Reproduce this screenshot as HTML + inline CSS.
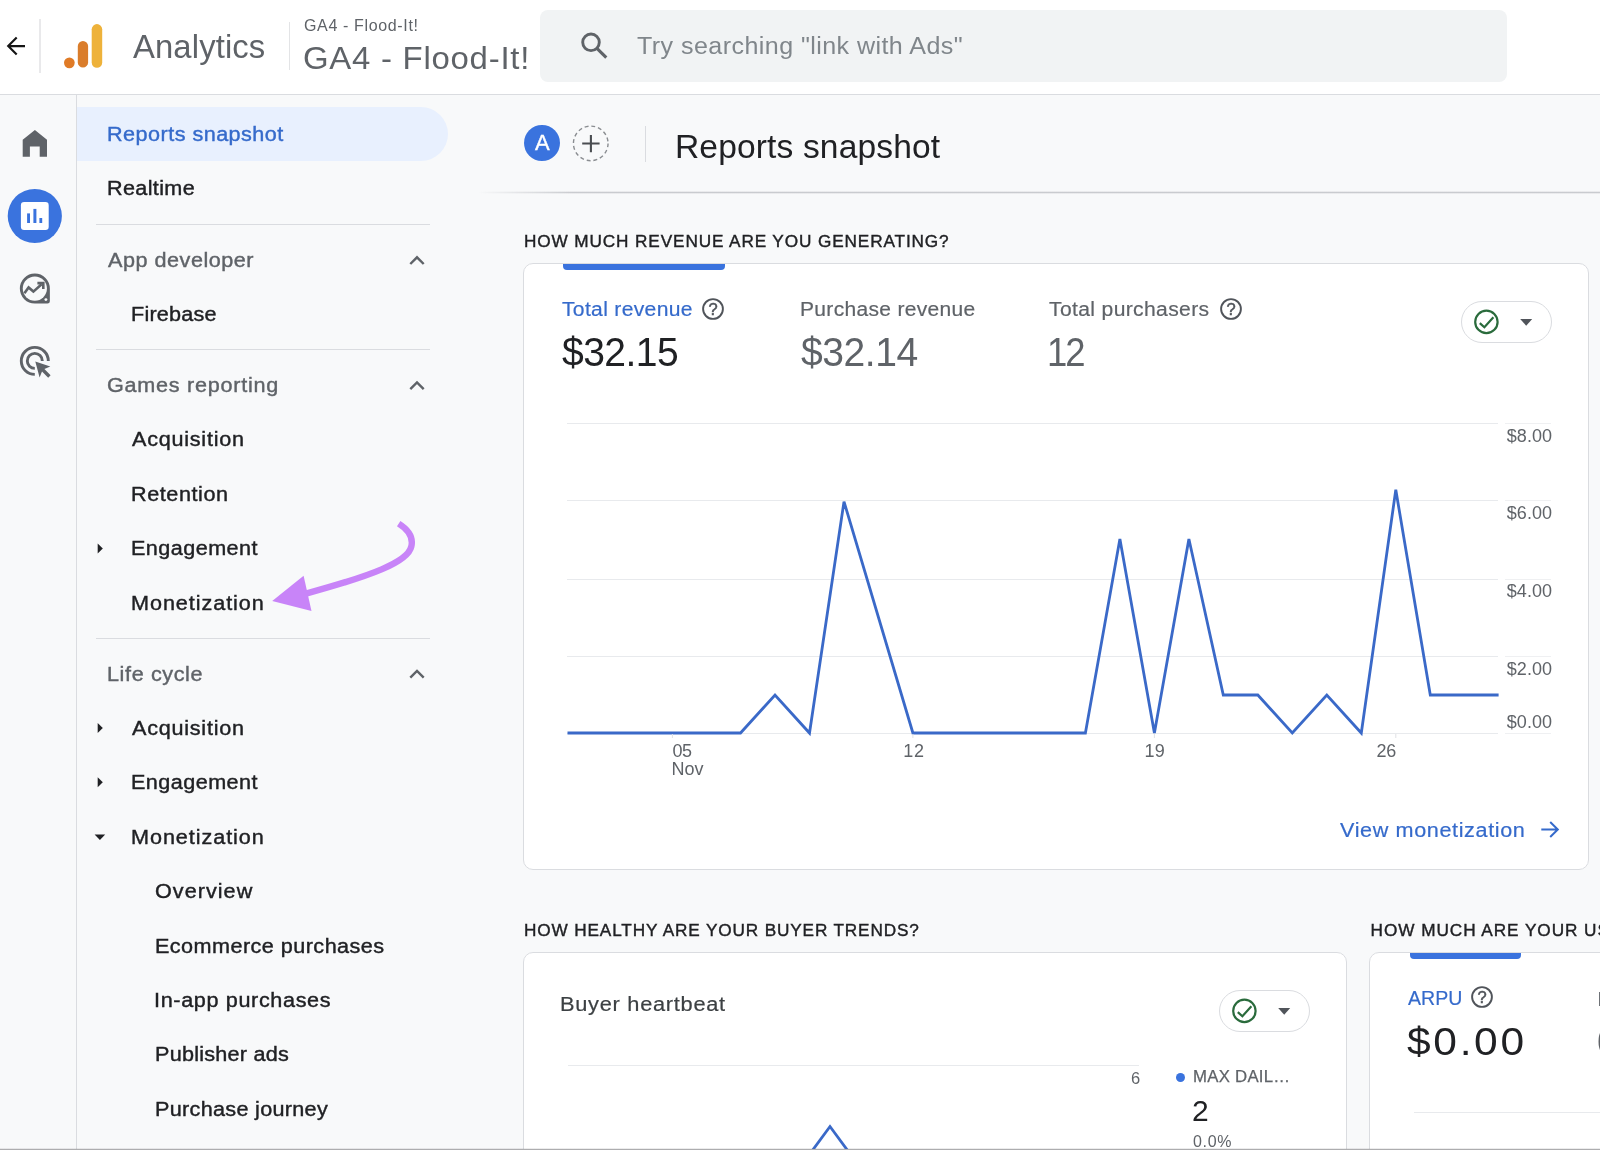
<!DOCTYPE html>
<html lang="en">
<head>
<meta charset="utf-8">
<title>Analytics - Reports snapshot</title>
<style>
*{box-sizing:border-box;margin:0;padding:0}
html,body{width:1600px;height:1150px;overflow:hidden;background:#f8f9fa}
body{position:relative;font-family:"Liberation Sans",Arial,sans-serif;color:#202124;-webkit-font-smoothing:antialiased}
#root{position:absolute;left:0;top:0;width:1600px;height:1150px;overflow:hidden;will-change:transform}
.abs{position:absolute}
.t{position:absolute;white-space:nowrap;line-height:1;transform-origin:0 50%}
/* header */
#hdr{position:absolute;left:0;top:0;width:1600px;height:95px;background:#fff;border-bottom:1px solid #dadce0}
#search{position:absolute;left:540px;top:10px;width:967px;height:72px;background:#f1f3f4;border-radius:8px}
.vsep{position:absolute;width:1px;background:#dadce0}
/* rail + nav */
#rail{position:absolute;left:0;top:95px;width:77px;height:1055px;background:#f8f9fa;border-right:1px solid #dadce0}
#nav{position:absolute;left:77px;top:95px;width:400px;height:1055px;background:#f8f9fa}
.nv{position:absolute;white-space:nowrap;line-height:1;font-size:20px;color:#202124;letter-spacing:.35px;transform-origin:0 50%;-webkit-text-stroke:.4px currentColor}
.nv.g{color:#5f6368}
.hr{position:absolute;left:96px;width:334px;height:1px;background:#dadce0}
.sec{position:absolute;white-space:nowrap;line-height:1;font-size:17.2px;letter-spacing:1.2px;color:#202124;transform-origin:0 50%;-webkit-text-stroke:.4px currentColor}
.card{position:absolute;background:#fff;border:1px solid #dadce0;border-radius:10px}
.grid{position:absolute;height:1px;background:#e8eaed}
.ax{position:absolute;white-space:nowrap;line-height:1;font-size:18px;color:#5f6368}
.m{font-size:20px;letter-spacing:.8px;-webkit-text-stroke:.2px currentColor}
.v{font-size:40.5px}
.grid.f{background:#eff0f2}
.pill{position:absolute;width:91px;height:42px;border:1px solid #dadce0;border-radius:21px;background:#fff}
</style>
</head>
<body>
<div id="root">
<!-- HEADER -->
<div id="hdr"></div>
<div id="search"></div>
<div class="vsep" style="left:39px;top:19px;width:2px;height:54px;background:#e9e9eb"></div>
<div class="vsep" style="left:289px;top:22px;height:48px;background:#e3e4e6"></div>
<svg class="abs" id="ic-back" style="left:4px;top:34px" width="24" height="24" viewBox="0 0 24 24"><path d="M12.7 3.6 4.2 12.1 12.7 20.6M4.6 12.1H21" fill="none" stroke="#151515" stroke-width="2.15"/></svg>
<svg class="abs" id="ic-logo" style="left:60px;top:20px" width="48" height="52" viewBox="60 20 48 52">
<rect x="91.7" y="24.1" width="10.5" height="43.7" rx="5.25" fill="#eeb23a"/>
<rect x="77.8" y="40.9" width="10.3" height="26.7" rx="5.15" fill="#da7d2b"/>
<circle cx="69.35" cy="62.85" r="5.35" fill="#e07b26"/>
</svg>
<span class="t fit" id="t-analytics" style="left:133px;top:31px;font-size:32.8px;letter-spacing:0.125px;color:#5f6368">Analytics</span>
<span class="t fit" id="t-prop-s" style="left:304px;top:17.5px;font-size:16px;letter-spacing:0.643px;color:#5f6368">GA4 - Flood-It!</span>
<span class="t fit" id="t-prop-l" style="left:303px;top:42.75px;font-size:31.5px;letter-spacing:0.714px;color:#5f6368;transform:scaleX(1.045)">GA4 - Flood-It!</span>
<svg class="abs" id="ic-search" style="left:578px;top:29px" width="32" height="32" viewBox="578 29 32 32"><circle cx="591" cy="42.3" r="8.3" fill="none" stroke="#5f6368" stroke-width="2.9"/><path d="M597.2 48.6 606.3 57.7" stroke="#5f6368" stroke-width="3.1" fill="none"/></svg>
<span class="t fit" id="t-search" style="left:637px;top:34.75px;font-size:23px;letter-spacing:0.393px;color:#80868b;transform:scaleX(1.09)">Try searching "link with Ads"</span>

<!-- RAIL -->
<div id="rail"></div>
<svg class="abs" id="ic-rail" style="left:0;top:120px" width="76" height="270" viewBox="0 120 76 270">
<path d="M22.7 139.7 34.9 129.9 47 139.7V156.8H39.7V146.6H29.9V156.8H22.7Z" fill="#5f6368"/>
<circle cx="34.8" cy="216" r="27.1" fill="#3a73de"/>
<rect x="20.9" y="202" width="27.8" height="28" rx="3.2" fill="#fff"/>
<rect x="27.1" y="213.4" width="2.9" height="9.6" fill="#3a73de"/>
<rect x="33.4" y="208.9" width="3" height="14.1" fill="#3a73de"/>
<rect x="39.4" y="218" width="2.8" height="5" fill="#3a73de"/>
<path d="M34.85 273.6a15 15 0 1 0 0 30h12.6a2.4 2.4 0 0 0 2.4-2.4V288.6a15 15 0 0 0-15-15Z" fill="#5f6368"/><circle cx="34.85" cy="288.6" r="12.1" fill="#f8f9fa"/><circle cx="45.9" cy="299.6" r="1.45" fill="#f8f9fa"/>
<g fill="none" stroke="#5f6368" stroke-width="2.9">
<path d="M24.4 293.2 28.6 287.4 33.4 291.6 41.6 284.2" stroke-width="2.6"/>
<path d="M37.4 283.1H43.3V289" stroke-width="2.6"/>
<path d="M48.3 360.9A13.5 13.5 0 1 0 34.8 374.4"/>
<path d="M42.3 360.9A7.5 7.5 0 1 0 34.8 368.4"/>
</g>
<path d="M35.3 361.6 50.3 366.6 44.4 369.1 50.6 375.3 48.2 377.7 42 371.5 39.6 377.4Z" fill="#5f6368"/>
</svg>

<!-- NAV -->
<div class="abs" id="sel" style="left:77px;top:107px;width:371px;height:54px;background:#e8f0fe;border-radius:0 27px 27px 0"></div>
<span class="nv fit" id="n0" style="left:107px;top:123.75px;letter-spacing:0.434px;color:#356acb;transform:scaleX(1.08)">Reports snapshot</span>
<span class="nv fit" id="n1" style="left:107px;top:178.4px;letter-spacing:0.328px;transform:scaleX(1.08)">Realtime</span>
<div class="hr" style="top:224px"></div>
<span class="nv g fit" id="n2" style="left:108px;top:249.5px;letter-spacing:0.483px;transform:scaleX(1.08)">App developer</span>
<span class="nv fit" id="n3" style="left:131px;top:303.75px;letter-spacing:0.186px;transform:scaleX(1.08)">Firebase</span>
<div class="hr" style="top:349px"></div>
<span class="nv g fit" id="n4" style="left:107px;top:374.5px;letter-spacing:0.686px;transform:scaleX(1.08)">Games reporting</span>
<span class="nv fit" id="n5" style="left:132px;top:429px;letter-spacing:0.7px;transform:scaleX(1.08)">Acquisition</span>
<span class="nv fit" id="n6" style="left:131px;top:483.61px;letter-spacing:0.525px;transform:scaleX(1.08)">Retention</span>
<span class="nv fit" id="n7" style="left:131px;top:538.21px;letter-spacing:0.412px;transform:scaleX(1.08)">Engagement</span>
<span class="nv fit" id="n8" style="left:131px;top:592.71px;letter-spacing:0.866px;transform:scaleX(1.08)">Monetization</span>
<div class="hr" style="top:638px"></div>
<span class="nv g fit" id="n9" style="left:107px;top:663.81px;letter-spacing:0.566px;transform:scaleX(1.08)">Life cycle</span>
<span class="nv fit" id="n10" style="left:132px;top:718px;letter-spacing:0.7px;transform:scaleX(1.08)">Acquisition</span>
<span class="nv fit" id="n11" style="left:131px;top:772.4px;letter-spacing:0.412px;transform:scaleX(1.08)">Engagement</span>
<span class="nv fit" id="n12" style="left:131px;top:826.9px;letter-spacing:0.866px;transform:scaleX(1.08)">Monetization</span>
<span class="nv fit" id="n13" style="left:154.6px;top:881.21px;letter-spacing:0.956px;transform:scaleX(1.08)">Overview</span>
<span class="nv fit" id="n14" style="left:155.2px;top:935.6px;letter-spacing:0.422px;transform:scaleX(1.08)">Ecommerce purchases</span>
<span class="nv fit" id="n15" style="left:153.6px;top:990px;letter-spacing:0.594px;transform:scaleX(1.08)">In-app purchases</span>
<span class="nv fit" id="n16" style="left:154.6px;top:1044.21px;letter-spacing:0.233px;transform:scaleX(1.08)">Publisher ads</span>
<span class="nv fit" id="n17" style="left:154.6px;top:1098.61px;letter-spacing:0.287px;transform:scaleX(1.08)">Purchase journey</span>
<svg class="abs" id="ic-nav" style="left:90px;top:250px" width="345" height="600" viewBox="90 250 345 600">
<g fill="none" stroke="#5f6368" stroke-width="2.4">
<path d="M410.3 264 417 257.3 423.7 264"/>
<path d="M410.3 389.2 417 382.5 423.7 389.2"/>
<path d="M410.3 677.6 417 670.9 423.7 677.6"/>
</g>
<g fill="#202124">
<path d="M97.7 543.4 102.8 548.4 97.7 553.4Z"/>
<path d="M97.7 723 102.8 728 97.7 733Z"/>
<path d="M97.7 777.3 102.8 782.3 97.7 787.3Z"/>
<path d="M94.6 834.5H105.2L99.9 840Z"/>
</g>
</svg>
<svg class="abs" id="ic-purple" style="left:265px;top:515px" width="160" height="105" viewBox="265 515 160 105">
<path d="M398.7 523.6C408 529.5 413.5 537.5 411.3 546.5C408 562 372 575.5 306 593.6" fill="none" stroke="#c884f8" stroke-width="6.4"/>
<path d="M272.2 600.9 303.6 575.7 311.5 611Z" fill="#c884f8"/>
</svg>

<!-- MAIN -->
<div class="abs" id="av" style="left:524.4px;top:125.4px;width:35.8px;height:35.8px;border-radius:50%;background:#3a73de"></div>
<span class="t fit" id="t-av" style="left:534.9px;top:132.41px;font-size:22px;color:#fff;-webkit-text-stroke:.35px #fff;letter-spacing:0px">A</span>
<svg class="abs" id="ic-plus" style="left:570px;top:123px" width="42" height="42" viewBox="570 123 42 42"><circle cx="590.75" cy="143.4" r="17.3" fill="none" stroke="#8a8d91" stroke-width="1.4" stroke-dasharray="3.9 2.9"/><path d="M582.2 143.5H599.6M590.9 134.9V152.2" stroke="#4a4d51" stroke-width="2.1" fill="none"/></svg>
<div class="vsep" style="left:645px;top:126px;height:36px;background:#dadce0"></div>
<span class="t fit" id="t-title" style="left:675px;top:130.81px;font-size:32.6px;letter-spacing:0.134px;color:#202124;transform:scaleX(1.03)">Reports snapshot</span>
<div class="abs" id="shadow" style="left:478px;top:191px;width:1122px;height:3px;background:linear-gradient(rgba(198,200,204,.28) 0 33.3%,#c9cbcf 33.3% 66.6%,rgba(198,200,204,.28) 66.6%);-webkit-mask-image:linear-gradient(90deg,transparent,#000 95px);mask-image:linear-gradient(90deg,transparent,#000 95px)"></div>

<span class="sec fit" id="s1" style="left:524px;top:233px;letter-spacing:0.883px">HOW MUCH REVENUE ARE YOU GENERATING?</span>
<div class="card" id="c1" style="left:523px;top:263px;width:1066px;height:607px"></div>
<div class="abs" style="left:563px;top:264px;width:161.5px;height:6px;background:#3a73de;border-radius:0 0 4px 4px"></div>
<span class="t m fit" id="m1" style="left:562px;top:299.25px;color:#356acb;letter-spacing:0.3px;transform:scaleX(1.055)">Total revenue</span>
<span class="t v fit" id="v1" style="left:562px;top:331.75px;color:#202124;letter-spacing:-0.6px;transform:scaleX(0.965)">$32.15</span>
<span class="t m fit" id="m2" style="left:800px;top:299.25px;color:#5f6368;letter-spacing:0.306px;transform:scaleX(1.05)">Purchase revenue</span>
<span class="t v fit" id="v2" style="left:801px;top:332px;color:#5f6368;letter-spacing:-0.48px;transform:scaleX(0.965)">$32.14</span>
<span class="t m fit" id="m3" style="left:1049px;top:299.25px;color:#5f6368;letter-spacing:0.333px;transform:scaleX(1.055)">Total purchasers</span>
<span class="t v fit" id="v3" style="left:1047.4px;top:332px;color:#5f6368;letter-spacing:-2.2px;transform:scaleX(.9)">12</span>
<svg class="abs" id="ic-q1" style="left:700px;top:296px" width="26" height="26" viewBox="-13 -13 26 26"><use href="#qm"/></svg>
<svg class="abs" id="ic-q2" style="left:1217.5px;top:295.5px" width="26" height="26" viewBox="-13 -13 26 26"><use href="#qm"/></svg>
<div class="pill" style="left:1461px;top:301px"></div>
<svg class="abs" id="ic-p1" style="left:1470px;top:306px" width="70" height="32" viewBox="-16.4 -15.9 70 32"><use href="#chk"/></svg>

<!-- chart 1 -->
<div class="grid" style="left:567px;top:423px;width:931px"></div>
<div class="grid" style="left:567px;top:500px;width:931px"></div>
<div class="grid" style="left:567px;top:579px;width:931px"></div>
<div class="grid" style="left:567px;top:656px;width:931px"></div>
<div class="grid" style="left:567px;top:733px;width:931px"></div>
<div class="grid f" style="left:1505px;top:423px;width:46px"></div>
<div class="grid f" style="left:1505px;top:500px;width:46px"></div>
<div class="grid f" style="left:1505px;top:579px;width:46px"></div>
<div class="grid f" style="left:1505px;top:656px;width:46px"></div>
<div class="grid f" style="left:1505px;top:733px;width:46px"></div>
<span class="ax fit" id="y8" style="left:1506.8px;top:426.75px;letter-spacing:0.05px">$8.00</span>
<span class="ax fit" id="y6" style="left:1506.8px;top:504px;letter-spacing:0.05px">$6.00</span>
<span class="ax fit" id="y4" style="left:1506.8px;top:582.31px;letter-spacing:0.05px">$4.00</span>
<span class="ax fit" id="y2" style="left:1506.8px;top:659.5px;letter-spacing:0.05px">$2.00</span>
<span class="ax fit" id="y0" style="left:1506.8px;top:712.81px;letter-spacing:0.05px">$0.00</span>
<span class="ax fit" id="x05" style="left:672.4px;top:742.31px;letter-spacing:-0.4px">05</span>
<span class="ax fit" id="xnov" style="left:671.4px;top:760px;letter-spacing:0.1px">Nov</span>
<span class="ax fit" id="x12" style="left:903.2px;top:742.31px;letter-spacing:0.8px">12</span>
<span class="ax fit" id="x19" style="left:1144.4px;top:742.31px;letter-spacing:0.4px">19</span>
<span class="ax fit" id="x26" style="left:1376.4px;top:742.31px;letter-spacing:-0.2px">26</span>
<svg class="abs" id="ch1" style="left:560px;top:480px" width="945" height="262" viewBox="560 480 945 262">
<path d="M567.5 733H740.5L775 695 809.5 733 844 501.6 912.9 733H1085.4L1119.9 539 1154.4 733 1188.9 539 1223.3 695H1257.8L1292.3 733 1326.8 695 1361.3 733 1395.8 489.8 1430.3 695H1498.6" fill="none" stroke="#3a69c8" stroke-width="2.8" stroke-linejoin="miter"/>
<path d="M672.4 734v4M912.9 734v4M1154.4 734v4M1395.8 734v4" stroke="#e0e2e5" stroke-width="1"/>
</svg>
<span class="t m fit" id="lnk" style="left:1339.6px;top:819.5px;color:#356acb;letter-spacing:0.574px;transform:scaleX(1.08)">View monetization</span>
<svg class="abs" id="ic-arr" style="left:1538px;top:818px" width="24" height="24" viewBox="1538 818 24 24"><path d="M1541.3 829.5H1557.5M1550.2 822 1557.8 829.5 1550.2 837" fill="none" stroke="#356acb" stroke-width="2"/></svg>

<span class="sec fit" id="s2" style="left:524px;top:922px;letter-spacing:0.862px">HOW HEALTHY ARE YOUR BUYER TRENDS?</span>
<div class="card" id="c2" style="left:523px;top:952px;width:824px;height:260px"></div>
<span class="t m fit" id="bh" style="left:560px;top:994.25px;color:#3c4043;letter-spacing:0.657px;transform:scaleX(1.09)">Buyer heartbeat</span>
<div class="pill" style="left:1219px;top:990px"></div>
<svg class="abs" id="ic-p2" style="left:1228.4px;top:994.5px" width="70" height="32" viewBox="-16.4 -15.9 70 32"><use href="#chk"/></svg>
<div class="grid" style="left:568px;top:1065px;width:571px"></div>
<span class="ax fit" id="b6" style="left:1131px;top:1069.75px;font-size:16.5px;letter-spacing:0px">6</span>
<div class="abs" style="left:1176px;top:1073px;width:9.2px;height:9.2px;border-radius:50%;background:#3a73de"></div>
<span class="t fit" id="mx" style="left:1193px;top:1068.25px;font-size:16.3px;letter-spacing:0.25px;color:#5f6368;-webkit-text-stroke:.25px #5f6368;transform:scaleX(1.03)">MAX DAIL…</span>
<span class="t fit" id="b2" style="left:1192px;top:1096.25px;font-size:30px;color:#202124;letter-spacing:0px">2</span>
<span class="t fit" id="bp" style="left:1193px;top:1133.61px;font-size:16px;color:#5f6368;letter-spacing:0.667px">0.0%</span>
<svg class="abs" id="ch2" style="left:800px;top:1115px" width="60" height="35" viewBox="800 1115 60 35"><path d="M812 1151 830 1126.5 848 1151" fill="none" stroke="#3a69c8" stroke-width="2.8"/></svg>

<span class="sec fit" id="s3" style="left:1370.6px;top:922px;letter-spacing:0.95px">HOW MUCH ARE YOUR USERS SPENDING?</span>
<div class="card" id="c3" style="left:1369px;top:952px;width:400px;height:260px"></div>
<div class="abs" style="left:1410px;top:953px;width:110.7px;height:6px;background:#3a73de;border-radius:0 0 4px 4px"></div>
<span class="t m fit" id="ar" style="left:1407.6px;top:987.41px;color:#356acb;letter-spacing:0px;font-size:21px;transform:scaleX(.93)">ARPU</span>
<svg class="abs" id="ic-q3" style="left:1469.3px;top:984px" width="26" height="26" viewBox="-13 -13 26 26"><use href="#qm"/></svg>
<span class="t fit" id="v4" style="left:1406.8px;top:1021.81px;font-size:39px;color:#202124;letter-spacing:2.45px;transform:scaleX(1.09)">$0.00</span>
<span class="t m" id="ar2" style="left:1597.5px;top:988.5px;color:#5f6368">Lifetime value</span>
<span class="t" id="v5" style="left:1597px;top:1022px;font-size:39px;color:#5f6368">0</span>
<div class="grid" style="left:1414px;top:1112px;width:200px"></div>

<svg width="0" height="0" style="position:absolute"><defs>
<g id="qm"><circle r="9.9" fill="none" stroke="#50545a" stroke-width="1.9"/><text x="0" y="5.9" text-anchor="middle" font-family="Liberation Sans,Arial,sans-serif" font-size="16.5" fill="#50545a" stroke="#50545a" stroke-width=".5">?</text></g>
<g id="chk"><circle r="11.2" fill="none" stroke="#2a6b3c" stroke-width="2.2"/><path d="M-6.6 1.2-2 5.4 7 -4.6" fill="none" stroke="#2a6b3c" stroke-width="2.2"/><path d="M33.8 -2.8H45.8L39.8 3.8Z" fill="#50545a"/></g>
</defs></svg>
<div class="abs" id="botline" style="left:0;top:1148px;width:1600px;height:2px;background:linear-gradient(rgba(120,120,124,.14) 50%,#adadaf 50%)"></div>
</div>
</body>
</html>
